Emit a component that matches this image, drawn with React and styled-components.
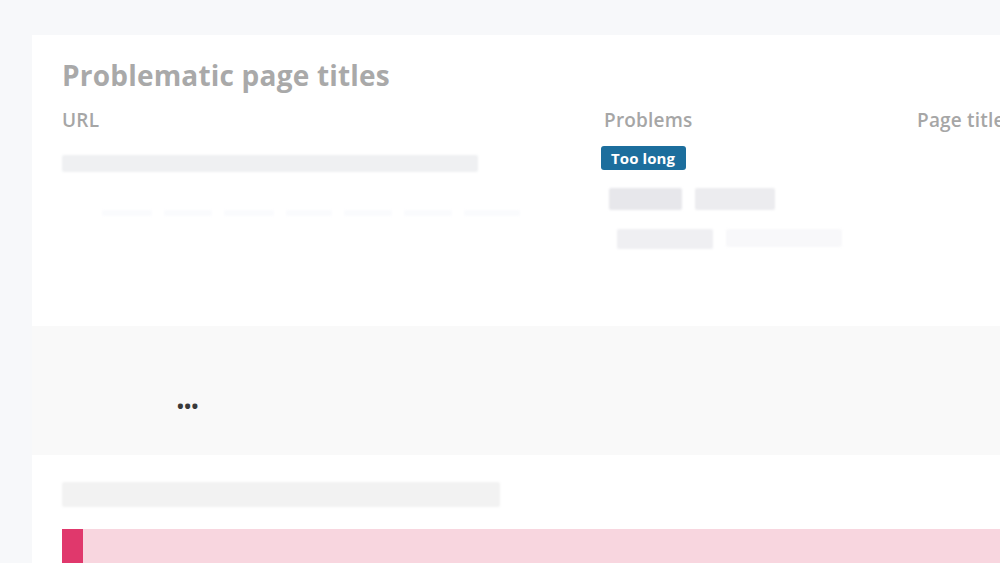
import React from "react";
import styled, { createGlobalStyle } from "styled-components";

const Global = createGlobalStyle`
  html, body { margin: 0; padding: 0; background: #f7f8fa; }
  body { font-family: "Open Sans", "Liberation Sans", sans-serif; overflow: hidden; }
`;

const Page = styled.div`
  width: 1000px;
  height: 563px;
  padding: 35px 0 0 32px;
  box-sizing: border-box;
  display: flex;
  flex-direction: column;
  overflow: hidden;
`;

const Card = styled.section`
  background: #ffffff;
  padding: ${(p) => p.$pad || "0"};
  height: ${(p) => p.$h || "auto"};
  box-sizing: border-box;
  flex-shrink: 0;
`;

const Band = styled.div`
  height: 129px;
  background: #f9f9f9;
  display: flex;
  align-items: flex-start;
  padding: 71px 0 0 145px;
  box-sizing: border-box;
  flex-shrink: 0;
`;

const Ellipsis = styled.span`
  font-size: 18px;
  font-weight: 700;
  color: #3a3a3a;
  letter-spacing: 0.5px;
  line-height: 1;
`;

const Title = styled.h2`
  margin: 0;
  font-size: 28px;
  font-weight: 700;
  color: #a9a9a9;
  letter-spacing: 0.2px;
  line-height: 36px;
`;

const Table = styled.div`
  display: grid;
  grid-template-columns: 539px 313px 1fr;
  margin-top: 14px;
`;

const Head = styled.div`
  font-size: 19px;
  font-weight: 600;
  color: #a6a6a6;
  line-height: 26px;
  letter-spacing: 0.2px;
  white-space: nowrap;
  padding-left: ${(p) => p.$indent || 0}px;
`;

const Cell = styled.div`
  display: flex;
  flex-direction: column;
  padding-top: ${(p) => p.$top || 0}px;
`;

const Skel = styled.div`
  width: ${(p) => p.$w}px;
  height: ${(p) => p.$h}px;
  background: ${(p) => p.$c};
  border-radius: 2px;
  filter: blur(1.2px);
  flex-shrink: 0;
`;

const Row = styled.div`
  display: flex;
  gap: ${(p) => p.$gap || 12}px;
  margin: ${(p) => p.$m || "0"};
`;

const Badge = styled.span`
  align-self: flex-start;
  background: #1c6e9d;
  color: #ffffff;
  font-size: 15px;
  font-weight: 700;
  line-height: 24px;
  padding: 0 11px 0 10px;
  letter-spacing: 0.1px;
  border-radius: 3px;
`;

const Alert = styled.div`
  height: 40px;
  margin-top: 22px;
  background: #f8d6df;
  border-left: 21px solid #e0386c;
`;

const faintDash = "#fafbfd";

export default function App() {
  return (
    <>
      <Global />
      <Page>
        <Card $pad="22px 0 0 30px" $h="291px">
          <Title>Problematic page titles</Title>
          <Table>
            <Head>URL</Head>
            <Head $indent={3}>Problems</Head>
            <Head $indent={3}>Page title</Head>
            <Cell $top={22}>
              <Skel $w={416} $h={17} $c="#eff0f2" />
              <Row $gap={12} $m="38px 0 0 40px">
                {[50, 48, 50, 46, 48, 48, 56].map((w, i) => (
                  <Skel key={i} $w={w} $h={6} $c={faintDash} />
                ))}
              </Row>
            </Cell>
            <Cell $top={13}>
              <Badge>Too long</Badge>
              <Row $gap={13} $m="18px 0 0 8px">
                <Skel $w={73} $h={22} $c="#e7e7eb" />
                <Skel $w={80} $h={22} $c="#ececef" />
              </Row>
              <Row $gap={13} $m="19px 0 0 16px">
                <Skel $w={96} $h={20} $c="#efeff2" />
                <Skel $w={116} $h={18} $c="#f8f8fa" />
              </Row>
            </Cell>
            <Cell />
          </Table>
        </Card>
        <Band>
          <Ellipsis>•••</Ellipsis>
        </Band>
        <Card $pad="27px 0 0 30px" $h="200px">
          <Skel $w={438} $h={25} $c="#f2f2f2" />
          <Alert />
        </Card>
      </Page>
    </>
  );
}
